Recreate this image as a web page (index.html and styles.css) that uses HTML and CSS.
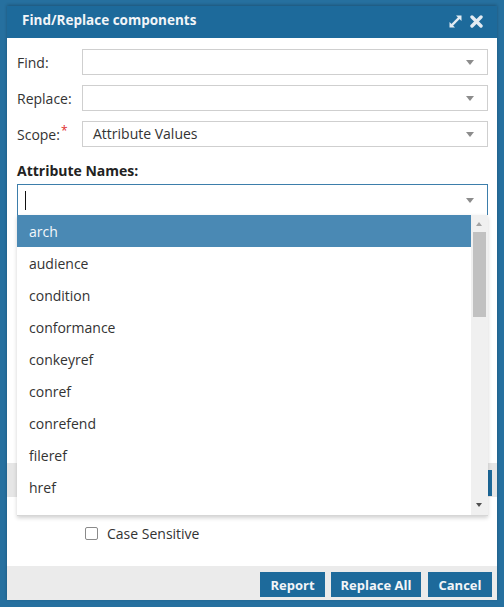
FILE: index.html
```html
<!DOCTYPE html>
<html lang="en">
<head>
<meta charset="utf-8">
<title>Find/Replace components</title>
<link rel="stylesheet" href="styles.css">
</head>
<body>
<div class="dialog">
  <div class="titlebar">
    <span class="title">Find/Replace components</span>
    <div class="title-tools">
      <svg class="tool" width="15" height="15" viewBox="0 0 15 15" aria-hidden="true">
        <path d="M4 11 L11 4" stroke="#e3ebf2" stroke-width="2.4" stroke-linecap="square"/>
        <path d="M8 1.5 H13.5 V7 Z" fill="#e3ebf2"/>
        <path d="M1.5 8 V13.5 H7 Z" fill="#e3ebf2"/>
      </svg>
      <svg class="tool" width="13" height="13" viewBox="0 0 13 13" aria-hidden="true">
        <path d="M2 2 L11 11 M11 2 L2 11" stroke="#e3ebf2" stroke-width="3.4" stroke-linecap="round"/>
      </svg>
    </div>
  </div>

  <div class="content">
    <div class="field">
      <label class="field-label">Find:</label>
      <div class="combo"><span class="combo-text"></span><span class="caret"></span></div>
    </div>
    <div class="field">
      <label class="field-label">Replace:</label>
      <div class="combo"><span class="combo-text"></span><span class="caret"></span></div>
    </div>
    <div class="field">
      <label class="field-label">Scope:<span class="req">*</span></label>
      <div class="combo"><span class="combo-text">Attribute Values</span><span class="caret"></span></div>
    </div>

    <div class="attr-label">Attribute Names:</div>
    <div class="attr-wrap">
      <div class="combo combo-focus"><span class="cursor"></span><span class="caret"></span></div>
      <div class="listbox">
        <ul class="options">
          <li class="option selected">arch</li>
          <li class="option">audience</li>
          <li class="option">condition</li>
          <li class="option">conformance</li>
          <li class="option">conkeyref</li>
          <li class="option">conref</li>
          <li class="option">conrefend</li>
          <li class="option">fileref</li>
          <li class="option">href</li>
        </ul>
        <div class="scrollbar">
          <span class="sb-up"></span>
          <span class="sb-thumb"></span>
          <span class="sb-down"></span>
        </div>
      </div>
    </div>

    <div class="values-area"></div>
    <div class="values-head"><span class="values-btn"></span></div>

    <div class="check-row">
      <span class="checkbox"></span>
      <span class="check-label">Case Sensitive</span>
    </div>
  </div>

  <div class="footer">
    <button class="btn btn-report">Report</button>
    <button class="btn btn-replace">Replace All</button>
    <button class="btn btn-cancel">Cancel</button>
  </div>
</div>
</body>
</html>
```

FILE: styles.css
```css
html, body {
  margin: 0;
  padding: 0;
}

body {
  background: #26709f;
  font-family: "Open Sans", "Liberation Sans", sans-serif;
  font-size: 14px;
  color: #333;
  padding: 6px 7px 0 7px;
  height: 607px;
  box-sizing: border-box;
  overflow: hidden;
}

.dialog {
  width: 490px;
  height: 594px;
  background: #fff;
  display: flex;
  flex-direction: column;
  box-shadow: 0 -1px 3px rgba(0, 0, 0, 0.25);
}

.titlebar {
  height: 32px;
  flex: none;
  background: #1d6a9b;
  display: flex;
  align-items: center;
  padding: 0 14px 0 15px;
}

.title {
  flex: 1;
  color: #f2f5f8;
  font-weight: 700;
  font-size: 13.5px;
  margin-top: -4px;
}

.title-tools {
  display: flex;
  align-items: center;
  gap: 7px;
  margin-top: -2px;
}

.tool {
  display: block;
}

.content {
  flex: 1;
  padding: 11px 9px 0 10px;
  display: flex;
  flex-direction: column;
}

.field {
  display: flex;
  align-items: center;
  height: 26px;
  margin-bottom: 10px;
}

.field-label {
  width: 65px;
  flex: none;
  color: #333;
}

.req {
  color: #e02b2b;
  font-size: 12px;
  position: relative;
  top: -5px;
  margin-left: 1px;
}

.combo {
  flex: 1;
  height: 26px;
  box-sizing: border-box;
  border: 1px solid #cfcfcf;
  display: flex;
  align-items: center;
  padding: 0 13px 0 10px;
  background: #fff;
}

.combo-text {
  flex: 1;
  color: #333;
  margin-top: -2px;
}

.caret {
  width: 0;
  height: 0;
  border-left: 4px solid transparent;
  border-right: 4px solid transparent;
  border-top: 5px solid #8c8c8c;
  margin-left: auto;
}

.attr-label {
  font-weight: 700;
  line-height: 20px;
  margin-top: 4px;
  color: #222;
}

.attr-wrap {
  position: relative;
  margin-top: 3px;
}

.combo-focus {
  height: 32px;
  border-color: #3d7eab;
  padding-left: 7px;
}

.cursor {
  width: 1px;
  height: 19px;
  background: #111;
}

.listbox {
  position: absolute;
  left: 0;
  top: 31px;
  width: 471px;
  height: 300px;
  background: #fff;
  border-bottom: 1px solid #d6d6d6;
  box-shadow: 0 2px 4px rgba(0, 0, 0, 0.18);
  display: flex;
  overflow: hidden;
  z-index: 5;
}

.options {
  list-style: none;
  margin: 0;
  padding: 0;
  flex: 1;
}

.option {
  height: 32px;
  line-height: 34px;
  padding-left: 12px;
  color: #333;
}

.option.selected {
  background: #4a89b4;
  color: #f4f8fb;
}

.scrollbar {
  width: 17px;
  flex: none;
  background: #f0f0f0;
  position: relative;
}

.sb-up,
.sb-down {
  position: absolute;
  left: 5px;
  width: 0;
  height: 0;
  border-left: 3.5px solid transparent;
  border-right: 3.5px solid transparent;
}

.sb-up {
  top: 7px;
  border-bottom: 4px solid #a3a3a3;
}

.sb-down {
  bottom: 8px;
  border-top: 4px solid #505050;
}

.sb-thumb {
  position: absolute;
  left: 2px;
  top: 17px;
  width: 13px;
  height: 85px;
  background: #c1c1c1;
}

.values-area {
  height: 247px;
  flex: none;
}

.values-head {
  height: 34px;
  margin: 0 -9px 0 -10px;
  background: #e6e6e6;
  position: relative;
}

.values-btn {
  position: absolute;
  right: 5px;
  top: 7px;
  width: 30px;
  height: 26px;
  background: #1d6a9b;
}

.check-row {
  display: flex;
  align-items: center;
  margin-top: 29px;
  padding-left: 68px;
  height: 14px;
}

.checkbox {
  width: 13px;
  height: 13px;
  box-sizing: border-box;
  border: 1px solid #8a8a8a;
  border-radius: 2px;
  background: #fff;
}

.check-label {
  margin-left: 9px;
  color: #333;
}

.footer {
  height: 34px;
  flex: none;
  background: #ebebeb;
  display: flex;
  justify-content: flex-end;
  align-items: flex-start;
  padding: 6px 5px 0 0;
  box-sizing: border-box;
}

.btn {
  height: 25px;
  border: 0;
  background: #1d6a9b;
  color: #f2f5f8;
  font-family: "Open Sans", "Liberation Sans", sans-serif;
  font-weight: 700;
  font-size: 13px;
  padding: 0;
  margin: 0;
  cursor: pointer;
}

.btn-report {
  width: 65px;
}

.btn-replace {
  width: 90px;
  margin-left: 6px;
}

.btn-cancel {
  width: 64px;
  margin-left: 7px;
}
```
